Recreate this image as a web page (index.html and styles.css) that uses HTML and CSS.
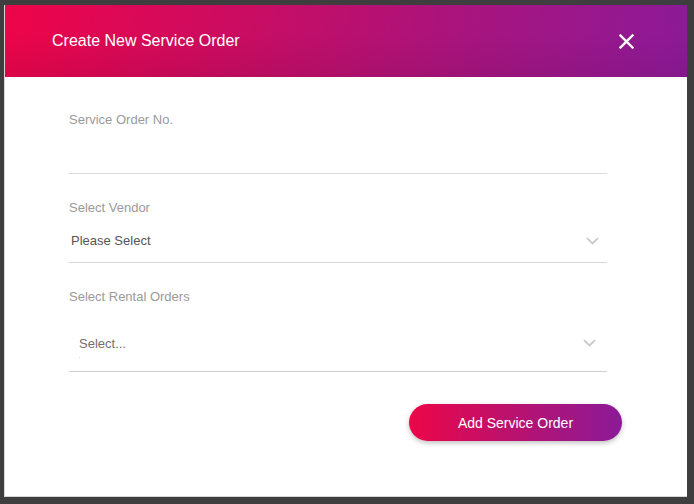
FILE: index.html
```html
<!DOCTYPE html>
<html>
<head>
<meta charset="utf-8">
<link rel="stylesheet" href="styles.css">
</head>
<body>
<div class="modal">
  <div class="modal-header">
    <h1 class="modal-title">Create New Service Order</h1>
    <button class="close" aria-label="Close">
      <svg width="15" height="15" viewBox="0 0 15 15"><path d="M1.5 1.5 L13.5 13.5 M13.5 1.5 L1.5 13.5" stroke="#fff" stroke-width="2.4" stroke-linecap="square" fill="none"/></svg>
    </button>
  </div>
  <div class="modal-body">
    <div class="field">
      <label class="label">Service Order No.</label>
      <div class="input"></div>
    </div>
    <div class="field">
      <label class="label">Select Vendor</label>
      <div class="select">
        <span class="select-value">Please Select</span>
        <svg class="chev" width="13" height="8" viewBox="0 0 13 8"><path d="M1 1.2 L6.5 6.5 L12 1.2" stroke="#c8c8c8" stroke-width="1.8" fill="none"/></svg>
      </div>
    </div>
    <div class="field">
      <label class="label">Select Rental Orders</label>
      <div class="multi">
        <div class="multi-row">
          <span class="placeholder">Select...</span>
          <svg class="chev2" width="13" height="8" viewBox="0 0 13 8"><path d="M1 1.2 L6.5 6.5 L12 1.2" stroke="#c8c8c8" stroke-width="1.8" fill="none"/></svg>
        </div>
        <div class="multi-input"><span class="caret"></span></div>
      </div>
    </div>
    <div class="actions">
      <button class="submit">Add Service Order</button>
    </div>
  </div>
</div>
</body>
</html>
```
FILE: styles.css
```css
* { box-sizing: border-box; }
html, body { margin: 0; padding: 0; }
body {
  background: #3e3e3e;
  font-family: "Liberation Sans", Arial, sans-serif;
  padding: 5px 0 0 4px;
  height: 504px;
  overflow: hidden;
}
.modal {
  width: 683px;
  height: 492px;
  background: #fff;
  border-left: 1px solid #d6d6d6;
  border-bottom: 1px solid #d6d6d6;
  display: flex;
  flex-direction: column;
}
.modal-header {
  height: 72px;
  flex: none;
  display: flex;
  align-items: center;
  justify-content: space-between;
  padding: 0 53px 0 47px;
  background: linear-gradient(98deg, #ee0449 0%, #c90d62 35%, #a51580 70%, #8c1a98 100%);
  position: relative;
}
.modal-header::after {
  content: "";
  position: absolute;
  left: 0; right: 0; top: 0; bottom: 0;
  background: linear-gradient(180deg, rgba(0,0,0,0) 40%, rgba(60,0,40,0.10) 100%);
  pointer-events: none;
}
.modal-title {
  margin: 0;
  font-size: 16px;
  font-weight: normal;
  color: #fff;
  position: relative;
  z-index: 1;
}
.close {
  background: none;
  border: 0;
  padding: 0;
  width: 15px;
  height: 15px;
  display: flex;
  position: relative;
  z-index: 1;
}
.modal-body {
  padding: 35px 65px 0 64px;
  display: flex;
  flex-direction: column;
}
.field {
  width: 538px;
  margin-bottom: 26px;
}
.label {
  display: block;
  font-size: 13px;
  line-height: 16px;
  color: #9a9a9a;
}
.input {
  height: 46px;
  border-bottom: 1px solid #dadada;
}
.select {
  height: 47px;
  border-bottom: 1px solid #d6d6d6;
  display: flex;
  align-items: center;
  justify-content: space-between;
  padding: 3px 8px 0 2px;
}
.select-value {
  font-size: 13px;
  color: #555;
}
.chev { display: block; }
.multi {
  height: 67px;
  border-bottom: 1px solid #cfcfcf;
  display: flex;
  flex-direction: column;
  padding: 22px 11px 0 10px;
}
.multi-row {
  display: flex;
  align-items: center;
  justify-content: space-between;
  height: 32px;
}
.placeholder {
  font-size: 13px;
  color: #707070;
}
.multi-input {
  height: 10px;
  position: relative;
}
.caret {
  display: block;
  width: 1px;
  height: 1px;
  background: #ddd;
  margin-top: -2px;
}
.actions {
  display: flex;
  justify-content: flex-end;
  margin-top: 6px;
}
.submit {
  width: 213px;
  height: 37px;
  border: 0;
  border-radius: 19px;
  background: linear-gradient(90deg, #ec0649 0%, #b8126f 50%, #8b1a98 100%);
  color: #fff;
  font-family: "Liberation Sans", Arial, sans-serif;
  font-size: 14px;
  box-shadow: 0 2px 5px rgba(0,0,0,0.25);
  padding: 0;
}
```
